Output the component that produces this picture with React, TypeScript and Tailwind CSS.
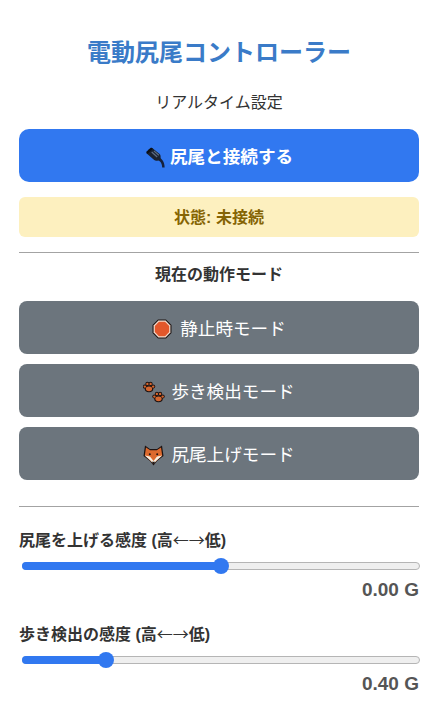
const plug = (
  <svg width="20" height="21" viewBox="0 0 18 19" className="shrink-0">
    <path d="M11 11 L14 13.5 C15 15 15.4 16.5 15.5 18.5 L17.7 18.5 C17.7 15.5 17 13 15 11 L13 9 Z" fill="#16213a" />
    <path d="M3.5 3.5 L6.5 .8 L13.5 6.5 C14.5 8.5 14.3 10.3 13 12 C11 12.8 9 12.3 7.5 11 L1 5.5 Z" fill="#1a2130" />
    <path d="M1 4.5 L3.5 2 L5.5 .5 L7 1.5 L3 5.5 L2 6 Z" fill="#0b0f18" />
    <path d="M6 4.5 L11 9 M8 3.5 L12.5 7.5" stroke="#5d6c84" strokeWidth="1.1" />
  </svg>
);
const stop = (
  <svg width="20" height="20" viewBox="0 0 20 20" className="shrink-0">
    <path d="M6 .5 H14 L19.5 6 V14 L14 19.5 H6 L.5 14 V6 Z" fill="#1d1413" />
    <path d="M6.4 1.6 H13.6 L18.4 6.4 V13.6 L13.6 18.4 H6.4 L1.6 13.6 V6.4 Z" fill="#f3dccf" />
    <path d="M6.9 2.8 H13.1 L17.2 6.9 V13.1 L13.1 17.2 H6.9 L2.8 13.1 V6.9 Z" fill="#e2572b" />
  </svg>
);
const pawShape = (x: number, y: number, s: number) => (
  <g transform={`translate(${x} ${y}) scale(${s})`}>
    <circle cx="-4.6" cy="-.5" r="2.3" fill="#1d1210" />
    <circle cx="-1.8" cy="-3.4" r="2.3" fill="#1d1210" />
    <circle cx="1.8" cy="-3.4" r="2.3" fill="#1d1210" />
    <circle cx="4.6" cy="-.5" r="2.3" fill="#1d1210" />
    <ellipse cx="0" cy="2" rx="4.8" ry="3.8" fill="#1d1210" />
    <circle cx="-4.6" cy="-.5" r="1.3" fill="#d5662f" />
    <circle cx="-1.8" cy="-3.4" r="1.3" fill="#d5662f" />
    <circle cx="1.8" cy="-3.4" r="1.3" fill="#d5662f" />
    <circle cx="4.6" cy="-.5" r="1.3" fill="#d5662f" />
    <ellipse cx="0" cy="2" rx="3.5" ry="2.6" fill="#d5662f" />
  </g>
);
const paws = (
  <svg width="22" height="22" viewBox="0 0 22 22" className="shrink-0">
    {pawShape(6, 6, 0.9)}
    {pawShape(15.5, 16, 0.9)}
  </svg>
);
const fox = (
  <svg width="21" height="21" viewBox="0 0 21 21" className="shrink-0">
    <path d="M2 .5 L7 4 H14 L19 .5 L20.5 11 L14 16 L10.5 20.5 L7 16 L.5 11 Z" fill="#1d1413" />
    <path d="M3 2.5 L7.2 5.3 H13.8 L18 2.5 L19.2 10.5 L10.5 18.8 L1.8 10.5 Z" fill="#dd6a2e" />
    <path d="M1.8 10.5 L7 11.5 L10.5 16 L14 11.5 L19.2 10.5 L13.5 15.5 L10.5 19 L7.5 15.5 Z" fill="#f6efe2" />
    <circle cx="6.8" cy="9.3" r="1" fill="#1d1413" />
    <circle cx="14.2" cy="9.3" r="1" fill="#1d1413" />
    <path d="M8.8 16.8 H12.2 L10.5 19.5 Z" fill="#1d1413" />
  </svg>
);

function Mode({ icon, label, gap }: { icon: React.ReactNode; label: string; gap: string }) {
  return (
    <button className={`h-[53px] w-full rounded-[8px] bg-[#6c757d] pt-[3px] text-[17.6px] font-normal text-white flex items-center justify-center ${gap}`}>
      {icon}
      <span>{label}</span>
    </button>
  );
}

function Slider({ label, pct, value, mt }: { label: string; pct: number; value: string; mt: string }) {
  return (
    <div className={mt}>
      <div className="text-[16px] leading-[20px] font-bold text-[#333333]">
        {label} (高
        <span className="font-normal leading-[0]" style={{ fontFamily: '"Noto Sans CJK JP", sans-serif' }}>←→</span>
        低)
      </div>
      <div className="relative mt-[11px] ml-[3px] mr-[-1px] h-[8px] rounded-full border border-[#b5b5b5] bg-[#efefef]">
        <div className="absolute left-[-1px] top-[-1px] h-[8px] rounded-full bg-[#3178f0]" style={{ width: `${pct}%` }} />
        <div className="absolute top-[-5px] h-[16px] w-[16px] -translate-x-1/2 rounded-full bg-[#3178f0]" style={{ left: `${pct}%` }} />
      </div>
      <div className="mt-[6px] text-right text-[19px] leading-[28px] font-bold text-[#555555]">{value}</div>
    </div>
  );
}

export default function App() {
  return (
    <div
      className="w-[436px] h-[709px] overflow-hidden bg-white pl-[19px] pr-[17px]"
      style={{ fontFamily: '"Liberation Sans", "Noto Sans CJK JP", sans-serif' }}
    >
      <h1 className="pt-[36px] text-center text-[24px] leading-[34px] font-bold text-[#3a7bc8]">電動尻尾コントローラー</h1>
      <p className="mt-[21px] text-center text-[16px] leading-[24px] text-[#333333]">リアルタイム設定</p>
      <button className="mt-[14px] flex h-[53px] w-full items-center justify-center gap-[5px] rounded-[10px] bg-[#3178f0] pt-[3px] text-[17.6px] font-bold text-white">
        {plug}
        <span>尻尾と接続する</span>
      </button>
      <div className="mt-[15px] flex h-[40px] items-center justify-center rounded-[6px] bg-[#fdf0bf] pt-[1px] text-[16px] font-bold text-[#856404]">
        状態: 未接続
      </div>
      <div className="mt-[15px] h-px bg-[#a3a3a3]" />
      <div className="mt-[12px] text-center text-[16px] leading-[20px] font-bold text-[#333333]">現在の動作モード</div>
      <div className="mt-[16px] flex flex-col gap-[10px]">
        <Mode icon={stop} label="静止時モード" gap="gap-[8px]" />
        <Mode icon={paws} label="歩き検出モード" gap="gap-[6px]" />
        <Mode icon={fox} label="尻尾上げモード" gap="gap-[7px]" />
      </div>
      <div className="mt-[26px] h-px bg-[#a3a3a3]" />
      <Slider mt="mt-[24px]" label="尻尾を上げる感度" pct={50} value="0.00 G" />
      <Slider mt="mt-[21px]" label="歩き検出の感度" pct={21} value="0.40 G" />
    </div>
  );
}
